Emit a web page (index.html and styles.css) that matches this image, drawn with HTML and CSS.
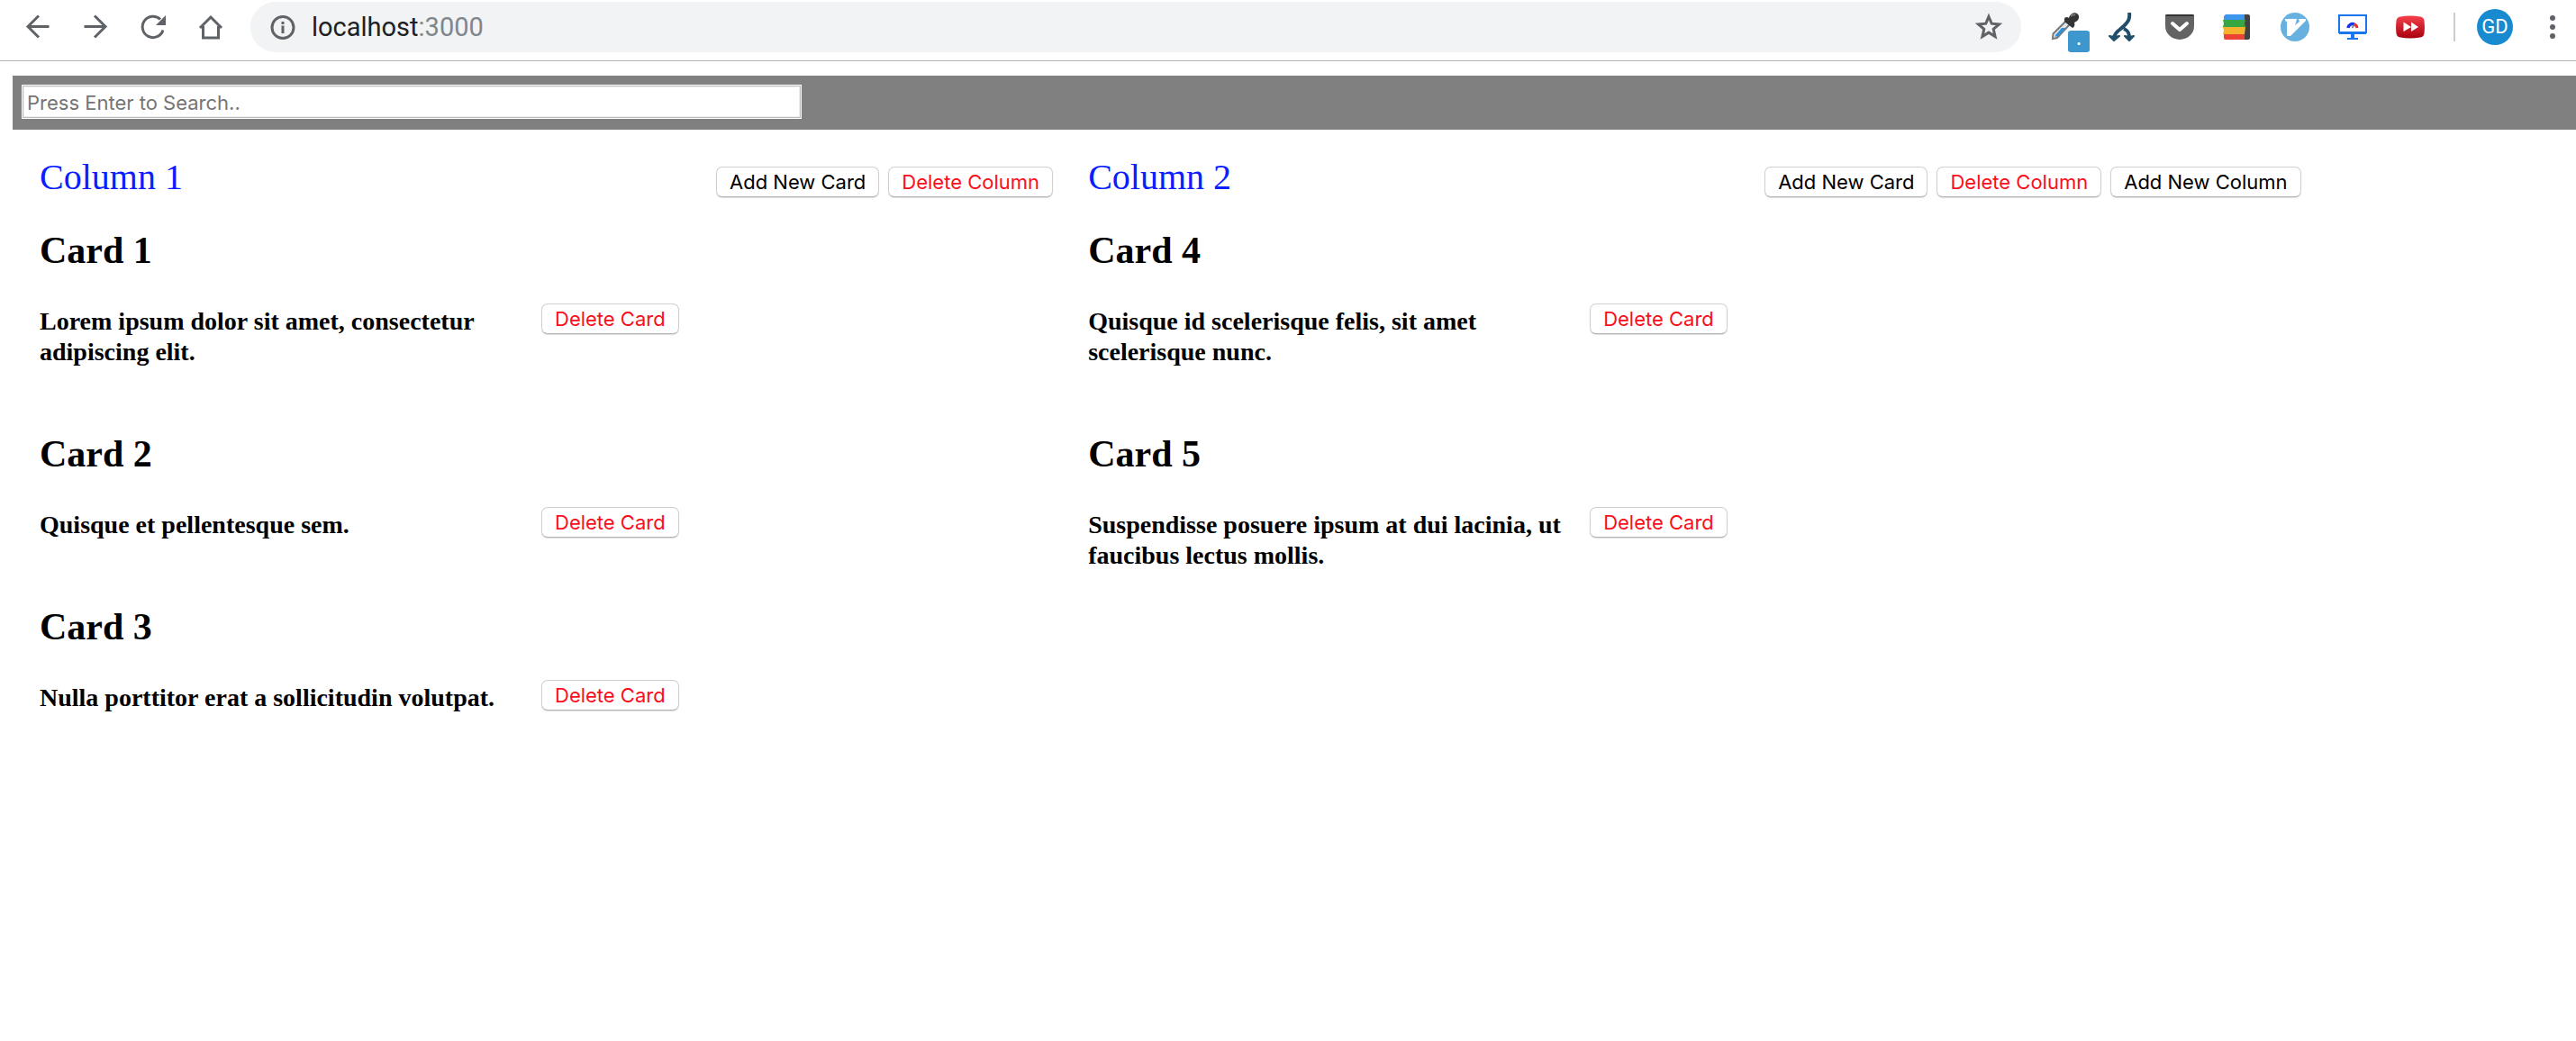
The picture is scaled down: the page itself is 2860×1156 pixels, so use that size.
FILE: index.html
```html
<!DOCTYPE html>
<html lang="en">
<head>
<meta charset="utf-8">
<title>Column board</title>
<link rel="stylesheet" href="styles.css">
</head>
<body>
<header class="toolbar">
  <nav class="nav">
    <button class="icon-btn" aria-label="Back"><svg width="32" height="32" viewBox="0 0 32 32" class="line"><path d="M28.500 15.500H5M17 3.500 5 15.500l12 12"/></svg></button>
    <button class="icon-btn" aria-label="Forward"><svg width="32" height="32" viewBox="0 0 32 32" class="line"><path d="M3.500 15.500h23M15 3.500l12 12-12 12"/></svg></button>
    <button class="icon-btn" aria-label="Reload"><svg width="32" height="32" viewBox="0 0 32 32" class="line"><path d="M27 19.500A11.700 11.700 0 1 1 24 7.500"/><path class="solid" d="M30 3v11H19z"/></svg></button>
    <button class="icon-btn" aria-label="Home"><svg width="32" height="32" viewBox="0 0 32 32" class="line"><path d="M4 17 16 5l12 12M7.500 15v13h17V15"/></svg></button>
  </nav>
  <div class="omnibox">
    <svg width="28" height="28" viewBox="0 0 28 28" class="line"><circle cx="14" cy="14.500" r="12"/><path d="M14 12.500v8.500M14 8v3"/></svg>
    <span class="url">localhost<span class="port">:3000</span></span>
    <button class="star" aria-label="Bookmark"><svg width="32" height="32" viewBox="0 0 32 32" class="line"><path d="m16 4.500 3.200 7.700 8.300.7-6.300 5.400 1.900 8.200-7.100-4.400-7.100 4.400 1.900-8.200-6.300-5.400 8.300-.7z"/></svg></button>
  </div>
  <div class="extensions">
    <span class="ext">
      <svg width="32" height="32" viewBox="0 0 32 32"><path d="M18 9 3.500 23.500 3 29l5-1L22 13" fill="#dfe6ea" stroke="#77797b" stroke-width="2"/><path d="m13 17-7 8v2l3-1 9-9z" fill="#2f8fd8"/><path d="M16 7c0-2 3-3 5-1 1-4 5-7 9-5 4 3 2 8-3 10 1 3 0 5-2 6-3-2-6-5-9-7z" fill="#333436"/><path d="M23 4q3-3 5-1" stroke="#777" fill="none" stroke-width="2"/></svg>
      <span class="badge">.</span>
    </span>
    <svg width="32" height="32" viewBox="0 0 32 32"><path d="M24 0c1 7-1 10-6 15S8 21 7 28M18 18c5 2 6 5 6 10" fill="none" stroke="#204e6b" stroke-width="4"/><path d="m2 26 5 1 6-1-6 5zM19 26l5 1 5-1-5 5z" fill="#204e6b" stroke="#204e6b" stroke-width="2" stroke-linejoin="round"/></svg>
    <svg width="32" height="32" viewBox="0 0 32 32"><path d="M2 2h28q2 0 2 2v11a16 15 0 0 1-32 0V4q0-2 2-2z" fill="#636363"/><path d="M0 4q0-2 2-2h28q2 0 2 2z" fill="#333"/><path d="m8 12 8 7 8-7" fill="none" stroke="#fff" stroke-width="4" stroke-linecap="round" stroke-linejoin="round"/></svg>
    <svg width="32" height="32" viewBox="0 0 32 32"><rect x="20" y="2" width="10" height="28" rx="2" fill="#424242"/><path d="M3 2h21v28H3l-2-3V4z" fill="#3d96ee"/><path d="M1 24h23v6H3q-2 0-2-2z" fill="#ed4336"/><path d="M0 16h25l-1 8H0l1-4z" fill="#f6b22c"/><path d="M0 8h25l-1 4 1 4H0l1-4z" fill="#36a743"/></svg>
    <svg width="32" height="32" viewBox="0 0 32 32"><circle cx="16" cy="16" r="16" fill="#67b1e0"/><path d="M5 7h13l-1 4-1 3 5-4-1-3h8v2L11 26H7V10L5 9z" fill="#fff"/></svg>
    <svg width="32" height="32" viewBox="0 0 32 32"><path d="M1 3h30v19H1zM10 29h12" fill="none" stroke="#1976ee" stroke-width="2"/><path d="M1 21h30v3H1zM14 23h4v6h-4z" fill="#1976ee"/><path d="M11 17a5 5 0 0 1 7-4" fill="none" stroke="#1735ef" stroke-width="3.500"/><path d="M18 13a5 5 0 0 1 3 4" fill="none" stroke="#e92b38" stroke-width="3"/><path d="m15.500 17 2.500-4" stroke="#777" stroke-width="1.500"/></svg>
    <svg width="32" height="32" viewBox="0 0 32 32"><defs><linearGradient id="red" x2="0" y2="1"><stop stop-color="#f5404c"/><stop offset="1" stop-color="#a9000d"/></linearGradient></defs><path d="M5 4.500q11-2 22 0 4 .5 4.500 4.500.8 7 0 14-.5 4-4.500 4.500-11 2-22 0Q1 27 .5 23q-.8-7 0-14Q1 5 5 4.500z" fill="url(#red)"/><path d="M8.500 10.500 17 16l-8.500 5zM17 10.500l8 5.500-8 5z" fill="#fff"/></svg>
  </div>
  <span class="divider"></span>
  <button class="avatar">GD</button>
  <button class="menu" aria-label="Menu"><svg width="32" height="32" viewBox="0 0 32 32"><g fill="#5f6368"><circle cx="16" cy="6" r="3"/><circle cx="16" cy="16" r="3"/><circle cx="16" cy="26" r="3"/></g></svg></button>
</header>
<main class="page">
  <form class="search"><input class="search-input" type="text" aria-label="Search" placeholder="Press Enter to Search.."></form>
  <div class="board">
    <section class="column">
      <div class="column-head"><span class="column-title">Column 1</span><button class="btn">Add New Card</button><button class="btn danger">Delete Column</button></div>
      <article class="card"><h2 class="card-title">Card 1</h2><div class="card-body"><p class="card-text">Lorem ipsum dolor sit amet, consectetur adipiscing elit.</p><button class="btn danger">Delete Card</button></div></article>
      <article class="card"><h2 class="card-title">Card 2</h2><div class="card-body"><p class="card-text">Quisque et pellentesque sem.</p><button class="btn danger">Delete Card</button></div></article>
      <article class="card"><h2 class="card-title">Card 3</h2><div class="card-body"><p class="card-text">Nulla porttitor erat a sollicitudin volutpat.</p><button class="btn danger">Delete Card</button></div></article>
    </section>
    <section class="column">
      <div class="column-head"><span class="column-title">Column 2</span><button class="btn">Add New Card</button><button class="btn danger">Delete Column</button><button class="btn">Add New Column</button></div>
      <article class="card"><h2 class="card-title">Card 4</h2><div class="card-body"><p class="card-text">Quisque id scelerisque felis, sit amet scelerisque nunc.</p><button class="btn danger">Delete Card</button></div></article>
      <article class="card"><h2 class="card-title">Card 5</h2><div class="card-body"><p class="card-text">Suspendisse posuere ipsum at dui lacinia, ut faucibus lectus mollis.</p><button class="btn danger">Delete Card</button></div></article>
    </section>
  </div>
</main>
</body>
</html>
```
FILE: styles.css
```css
* { box-sizing: border-box; }
body { margin: 0; background: #fff; color: #000; font-family: "Liberation Serif", "Times New Roman", serif; }
button { margin: 0; padding: 0; border: 0; background: none; font-family: Inter, sans-serif; }
svg { display: block; flex: none; }
.line { fill: none; stroke: #5f6368; stroke-width: 3; }
.line .solid { fill: #5f6368; stroke: none; }

/* Browser toolbar */
.toolbar { display: flex; align-items: center; height: 68px; padding: 0 10px 8px; border-bottom: 1px solid #b3b6b8; }
.nav { display: flex; }
.icon-btn { display: flex; justify-content: center; width: 64px; }
.omnibox { display: flex; flex: 1; align-items: center; gap: 18px; height: 56px; margin: 0 32px 0 12px; padding: 0 20px 0 22px; border-radius: 28px; background: #f1f3f4; }
.url { flex: 1; font: 29px/32px Roboto, sans-serif; color: #202124; }
.port { color: #80868b; }
.extensions { display: flex; gap: 32px; }
.ext { position: relative; }
.badge { position: absolute; left: 20px; top: 20px; width: 24px; height: 24px; border-radius: 3px; background: #3d97cd; color: #fff; font: bold 18px/20px Inter, sans-serif; text-align: center; }
.divider { width: 2px; height: 32px; margin: 0 24px 0 32px; background: #ccc; }
.avatar { width: 40px; height: 40px; margin-right: 28px; border-radius: 50%; background: #188ad0; color: #fff; font: 22px/40px Roboto, sans-serif; }

/* Search bar */
.page { padding: 16px 0 0 14px; }
.search { padding: 10px; background: #808080; height: 60px; }
.search-input { display: block; width: 866px; max-width: 100%; height: 38px; padding: 2px 5px 0; border: 1px solid #fff; outline: 1px solid #bbb; outline-offset: -2px; box-shadow: inset 0 0 0 2px #eee; background: #fff; font: 22px/32px Inter, sans-serif; }
.search-input::placeholder { color: #757575; opacity: 1; }

/* Board */
.board { display: grid; grid-template-columns: 5fr 7fr; padding: 30px 22px 0 30px; }
.column-head { display: flex; align-items: baseline; gap: 10px; height: 80px; }
.column-title { width: 741px; font-size: 40px; line-height: 46px; color: #0a1eff; }
.card { padding-bottom: 72px; }
.card-title { margin: 0; font-size: 42px; line-height: 48px; }
.card-body { display: flex; align-items: flex-start; gap: 16px; margin-top: 35px; }
.card-text { width: 541px; margin: 0; padding-top: 3px; font-size: 28px; font-weight: bold; line-height: 34px; }
.btn { flex: none; height: 34px; padding: 0 14px; border: 1px solid #d0d0d0; border-bottom-color: #b4b4b4; border-radius: 7px; box-shadow: 0 1px 1px #ddd; background: #fff; color: #000; font-size: 22px; line-height: 32px; }
.danger { color: #fc0d1b; }
```
